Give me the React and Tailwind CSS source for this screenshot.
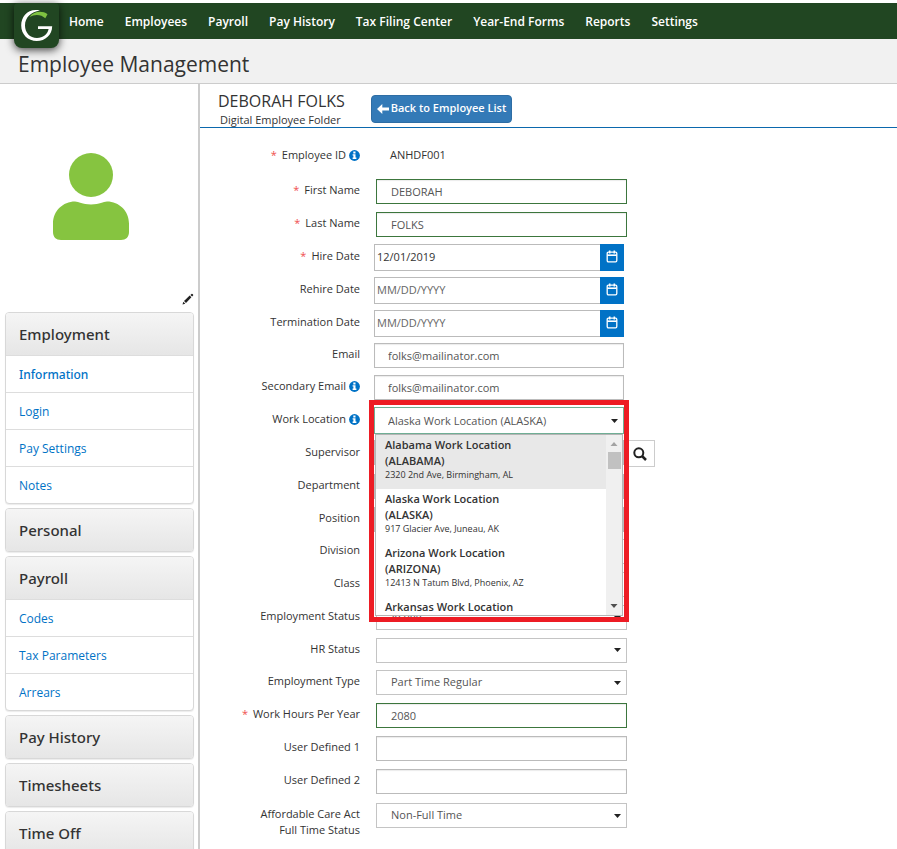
import React from "react";

const NAV = ["Home", "Employees", "Payroll", "Pay History", "Tax Filing Center", "Year-End Forms", "Reports", "Settings"];

const MENU = [
  { title: "Employment", links: ["Information", "Login", "Pay Settings", "Notes"], active: "Information" },
  { title: "Personal", links: [] },
  { title: "Payroll", links: ["Codes", "Tax Parameters", "Arrears"] },
  { title: "Pay History", links: [] },
  { title: "Timesheets", links: [] },
  { title: "Time Off", links: [] },
];

const LOCATIONS = [
  { name: "Alabama Work Location", state: "(ALABAMA)", address: "2320 2nd Ave, Birmingham, AL" },
  { name: "Alaska Work Location", state: "(ALASKA)", address: "917 Glacier Ave, Juneau, AK" },
  { name: "Arizona Work Location", state: "(ARIZONA)", address: "12413 N Tatum Blvd, Phoenix, AZ" },
  { name: "Arkansas Work Location" },
];

function Logo() {
  return (
    <a href="#home" aria-label="Home page" className="relative z-10 flex h-[45px] w-[45px] shrink-0 items-center justify-center self-start rounded-b-lg rounded-t-sm bg-[#214622] shadow-[0_2px_9px_rgba(0,0,0,0.75)]">
      <svg width="34" height="34" viewBox="0 0 34 34" fill="none" aria-hidden="true">
        <path d="M20 1.500C8 -1 1.200 7.500 1.200 16.500C1.200 25.500 8 32 16.700 32C25.500 32 32 26 32.200 17.300H18V20H28.600C27.500 25.500 23 29 17 29C9.800 29 5 23.500 5 16.500C5 8.500 11 2.800 20 1.500Z" fill="#fff" />
        <path d="M9.500 8C14 1.800 22.500 1.600 27.500 5.200L25.300 9.200C21.500 5.500 15 4.600 9.500 8Z" fill="#7fc241" />
      </svg>
    </a>
  );
}

function InfoIcon() {
  return (
    <svg width="11" height="11" viewBox="0 0 11 11" className="mb-px ml-[3px] shrink-0" aria-hidden="true">
      <circle cx="5.500" cy="5.500" r="5.400" fill="#0072c6" />
      <path d="M4.300 1.600h2.200v1.800H4.300zM3.600 4.200h2.900v3.400h.9v1.400H3.600V7.600h.8V5.600h-.8z" fill="#fff" />
    </svg>
  );
}

function CalendarIcon() {
  return (
    <svg width="12" height="13" viewBox="0 0 12 13" fill="none" stroke="#fff" aria-hidden="true">
      <rect x="1.200" y="2.200" width="9.600" height="9.600" rx="1.200" strokeWidth="1.300" />
      <path d="M1.200 5.200H10.800" strokeWidth="1.600" />
      <path d="M3.700 0.500V3.400M8.300 0.500V3.400" strokeWidth="1.600" />
    </svg>
  );
}

function Caret() {
  return (
    <svg width="7" height="4" viewBox="0 0 7 4" className="pointer-events-none absolute right-[6px] top-1/2 -translate-y-1/2" aria-hidden="true">
      <path d="M0 0h7L3.500 4z" fill="#222" />
    </svg>
  );
}

function Row({ id, label, info, required, tight, children }) {
  return (
    <div className={`flex items-center ${tight ? "h-8" : "h-[33px]"}`}>
      <label htmlFor={id} className="mr-[14px] flex w-[160px] shrink-0 items-center justify-end pb-[2px] text-[#333]">
        {required && <span className="mr-[5px] text-[#f0504f]">*</span>}
        {label}
        {info && <InfoIcon />}
      </label>
      {children}
    </div>
  );
}

function TextField({ id, value = "", valid, flush, disabled }) {
  const place = flush ? "w-[250px]" : "ml-[2px] w-[251px]";
  const edge = valid ? "border-[#3c763d]" : "border-[#bbb]";
  return (
    <input
      id={id}
      type="text"
      defaultValue={value}
      disabled={disabled}
      className={`h-[25px] border pr-2 text-[#555] shadow-[inset_0_1px_1px_rgba(0,0,0,0.08)] outline-none ${flush ? "pl-[13px]" : "pl-[14px]"} ${place} ${edge} ${disabled ? "bg-[#ccc]" : "bg-white"}`}
    />
  );
}

function DateField({ id, value }) {
  return (
    <div className="flex h-[27px] w-[250px]">
      <input id={id} type="text" defaultValue={value} placeholder="MM/DD/YYYY" className="w-[226px] border border-r-0 border-[#bbb] bg-white pl-[2px] text-[#333] outline-none placeholder:text-[#666]" />
      <button type="button" aria-label="Open calendar" className="flex w-6 items-center justify-center bg-[#0072c6] pb-[2px]">
        <CalendarIcon />
      </button>
    </div>
  );
}

function SelectField({ id, value = "", flush }) {
  return (
    <div className={`relative ${flush ? "w-[250px]" : "ml-[2px] w-[251px]"}`}>
      <select id={id} defaultValue={value} className={`block w-full appearance-none border bg-white text-[#555] outline-none ${flush ? "h-[27px] border-[#6fae95] pl-[13px] pt-[2px]" : "h-[25px] border-[#c4c4c4] pl-[14px]"}`}>
        <option value={value}>{value}</option>
      </select>
      <Caret />
    </div>
  );
}

function LocationList() {
  return (
    <div className="pointer-events-none absolute -left-[5px] -top-[7px] z-20 h-[222px] w-[260px] border-[5px] border-[#ed1c24] pl-px pr-px pt-[29px]">
      <div className="flex h-[182px] overflow-hidden border border-[#b5b5b5] bg-white">
        <ul role="listbox" aria-label="Work locations" className="min-w-0 flex-1">
          {LOCATIONS.map((item, i) => (
            <li key={item.name} role="option" aria-selected={i === 0} className={`pl-[9px] pt-[2px] text-[#333] ${item.address ? "h-[54px]" : ""} ${i === 0 ? "bg-[#e8e8e8]" : ""}`}>
              <div className="font-semibold leading-4">{item.name}</div>
              {item.state && <div className="font-semibold leading-[15px]">{item.state}</div>}
              {item.address && <div className="text-[9px] leading-[13px]">{item.address}</div>}
            </li>
          ))}
        </ul>
        <div className="flex w-4 flex-col items-center bg-[#f0f0f0]">
          <svg width="16" height="17" viewBox="0 0 16 17" aria-hidden="true"><path d="M4.500 11h7L8 7z" fill="#a3a3a3" /></svg>
          <div className="h-[17px] w-[13px] bg-[#c1c1c1]" />
          <svg width="16" height="17" viewBox="0 0 16 17" className="mt-auto" aria-hidden="true"><path d="M4.500 6h7L8 10z" fill="#505050" /></svg>
        </div>
      </div>
    </div>
  );
}

function Sidebar() {
  return (
    <aside className="w-[200px] shrink-0 border-r-2 border-[#ccc]">
      <div className="flex h-[205px] justify-center pr-4 pt-[69px]">
        <svg width="76" height="88" viewBox="0 0 76 88" fill="#86c440" aria-hidden="true">
          <circle cx="38" cy="22" r="22" />
          <path d="M22 48.500C10 48.500 0 58 0 70.500V79C0 84 3 87 8 87H68C73 87 76 84 76 79V70.500C76 58 66 48.500 54 48.500C50 48.500 47 51.500 38 51.500C29 51.500 26 48.500 22 48.500Z" />
        </svg>
      </div>
      <div className="flex h-[23px] justify-end pr-1 pt-1">
        <button type="button" aria-label="Edit photo" className="h-3 w-3">
          <svg width="12" height="12" viewBox="0 0 12 12" fill="#222" aria-hidden="true">
            <path d="M0.500 11.500L1.300 8.700L3.300 10.700ZM2 8L7.700 2.600L9.400 4.300L4 10ZM8.400 1.900L9.500 .9Q10 .5 10.500 1L11 1.500Q11.500 2 11.100 2.500L10.100 3.600Z" />
          </svg>
        </button>
      </div>
      <nav className="flex flex-col gap-1 pl-[5px] pr-1" aria-label="Employee sections">
        {MENU.map((group) => (
          <section key={group.title} className="overflow-hidden rounded border border-[#d8d8d8] bg-white shadow-[0_1px_1px_rgba(0,0,0,0.08)]">
            <h2 className="flex h-[42px] items-center bg-linear-to-b from-[#f5f5f5] to-[#e6e6e6] pl-[13px] font-['Noto_Sans',sans-serif] text-[15px] font-medium text-[#333]">{group.title}</h2>
            {group.links.map((link) => (
              <a key={link} href={`#${link}`} className={`flex h-[37px] items-center border-t border-[#ddd] pl-[13px] pt-px text-[12px] text-[#0072c6] ${link === group.active ? "font-['Noto_Sans',sans-serif] font-medium" : ""}`}>
                {link}
              </a>
            ))}
          </section>
        ))}
      </nav>
    </aside>
  );
}

export default function App() {
  return (
    <div className="h-screen overflow-hidden bg-white pt-[3px] font-['Open_Sans',sans-serif] text-[11px] text-[#333]">
      <header className="flex h-9 items-center bg-[#214622] pl-[14px]">
        <Logo />
        <nav className="ml-[10px] flex gap-[21px] whitespace-nowrap pt-[2px] text-[12px] font-semibold text-white" aria-label="Main">
          {NAV.map((item) => (
            <a key={item} href={`#${item}`}>{item}</a>
          ))}
        </nav>
      </header>
      <div className="flex h-[45px] items-center border-b border-[#ccc] bg-[#f1f1f1] pl-[18px] pt-[6px]">
        <h1 className="text-[21px] font-medium leading-7">Employee Management</h1>
      </div>
      <div className="flex">
        <Sidebar />
        <main className="min-w-0 flex-1">
          <div className="flex h-11 items-center border-b border-[#0b68ad] pl-[18px]">
            <div className="w-[153px] pt-[6px]">
              <div className="text-[16px] leading-[22px]">DEBORAH FOLKS</div>
              <div className="pl-[2px] leading-[15px]">Digital Employee Folder</div>
            </div>
            <button type="button" className="mt-[6px] flex h-7 w-[141px] items-center justify-center gap-[2px] rounded-sm border border-[#2e6da4] bg-[#337ab7] font-semibold text-white">
              <svg width="12" height="10" viewBox="0 0 12 10" fill="#fff" aria-hidden="true"><path d="M0 5L5.300 0V3.600H12V6.400H5.300V10Z" /></svg>
              Back to Employee List
            </button>
          </div>
          <form className="pt-3">
            <div className="mb-[2px]">
              <Row id="employee-id" label="Employee ID" info required>
                <output id="employee-id" className="pb-[2px] pl-4">ANHDF001</output>
              </Row>
            </div>
            <Row id="first" label="First Name" required><TextField id="first" value="DEBORAH" valid /></Row>
            <Row id="last" label="Last Name" required><TextField id="last" value="FOLKS" valid /></Row>
            <Row id="hire" label="Hire Date" required><DateField id="hire" value="12/01/2019" /></Row>
            <Row id="rehire" label="Rehire Date"><DateField id="rehire" /></Row>
            <Row id="term" label="Termination Date" tight><DateField id="term" /></Row>
            <Row id="email" label="Email" tight><TextField id="email" value="folks@mailinator.com" flush /></Row>
            <Row id="email2" label="Secondary Email" info><TextField id="email2" value="folks@mailinator.com" flush /></Row>
            <Row id="location" label="Work Location" info>
              <div className="relative">
                <SelectField id="location" value="Alaska Work Location (ALASKA)" flush />
                <LocationList />
              </div>
            </Row>
            <Row id="supervisor" label="Supervisor">
              <div className="flex">
                <TextField id="supervisor" flush />
                <button type="button" aria-label="Find supervisor" className="flex h-[27px] w-[31px] items-center justify-center border border-[#ccc] bg-white">
                  <svg width="14" height="14" viewBox="0 0 14 14" fill="none" stroke="#222" aria-hidden="true">
                    <circle cx="5.800" cy="5.800" r="4.500" strokeWidth="2" />
                    <path d="M9 9L13 13" strokeWidth="2.500" />
                  </svg>
                </button>
              </div>
            </Row>
            <Row id="department" label="Department"><TextField id="department" flush disabled /></Row>
            <Row id="position" label="Position" tight><TextField id="position" flush disabled /></Row>
            <Row id="division" label="Division"><SelectField id="division" /></Row>
            <Row id="class" label="Class"><SelectField id="class" /></Row>
            <Row id="status" label="Employment Status"><SelectField id="status" value="Active" /></Row>
            <Row id="hr" label="HR Status" tight><SelectField id="hr" /></Row>
            <Row id="type" label="Employment Type"><SelectField id="type" value="Part Time Regular" /></Row>
            <Row id="hours" label="Work Hours Per Year" required><TextField id="hours" value="2080" valid /></Row>
            <Row id="user1" label="User Defined 1"><TextField id="user1" /></Row>
            <Row id="user2" label="User Defined 2" tight><TextField id="user2" /></Row>
            <div className="flex items-start pt-[6px]">
              <label htmlFor="aca" className="mr-[14px] mt-[3px] w-[160px] text-right leading-4">
                Affordable Care Act<br />Full Time Status
              </label>
              <SelectField id="aca" value="Non-Full Time" />
            </div>
          </form>
        </main>
      </div>
    </div>
  );
}
